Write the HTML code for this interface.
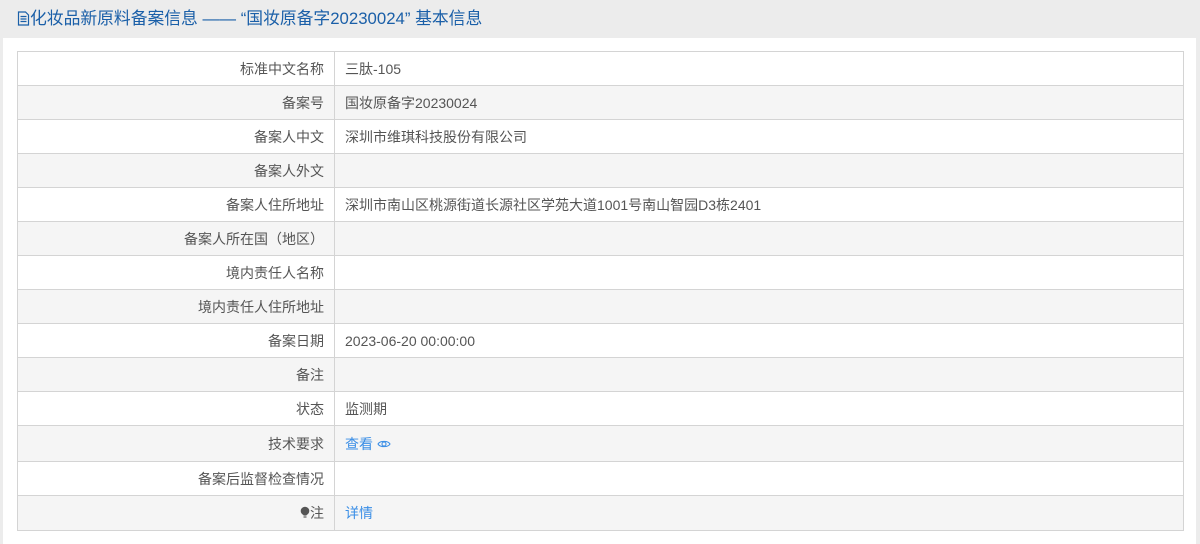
<!DOCTYPE html>
<html><head><meta charset="utf-8"><style>
*{margin:0;padding:0;box-sizing:border-box}
body{width:1200px;height:544px;background:#ececec;font-family:"Liberation Sans","Noto Sans CJK SC",sans-serif;overflow:hidden;position:relative}
.hd{position:absolute;left:17px;top:8px;font-size:16.8px;color:#1a5fa8;line-height:22px;white-space:nowrap}
.panel{position:absolute;left:3px;top:38px;width:1193px;height:506px;background:#fff}
table{position:absolute;left:17px;top:51px;width:1167px;border-collapse:collapse;font-size:14px;color:#555}
td{border:1px solid #d4d4d4;height:34px;padding:0 10px;line-height:20px}
td.l{width:317px;text-align:right}
tr:nth-child(even) td{background:#f5f5f5}
a{color:#3a8ee6;text-decoration:none}
</style></head><body>
<div class="hd"><svg width="13" height="15" viewBox="0 0 13 15" style="vertical-align:-2px"><path d="M1.5 1h7l3 3v10h-10z M3.5 5.5h6 M3.5 8h6 M3.5 10.5h6" fill="none" stroke="#1a5fa8" stroke-width="1.2"/></svg>化妆品新原料备案信息 —— “国妆原备字20230024” 基本信息</div>
<div class="panel"></div>
<table>
<tr><td class="l">标准中文名称</td><td>三肽-105</td></tr>
<tr><td class="l">备案号</td><td>国妆原备字20230024</td></tr>
<tr><td class="l">备案人中文</td><td>深圳市维琪科技股份有限公司</td></tr>
<tr><td class="l">备案人外文</td><td></td></tr>
<tr><td class="l">备案人住所地址</td><td>深圳市南山区桃源街道长源社区学苑大道1001号南山智园D3栋2401</td></tr>
<tr><td class="l">备案人所在国（地区）</td><td></td></tr>
<tr><td class="l">境内责任人名称</td><td></td></tr>
<tr><td class="l">境内责任人住所地址</td><td></td></tr>
<tr><td class="l">备案日期</td><td>2023-06-20 00:00:00</td></tr>
<tr><td class="l">备注</td><td></td></tr>
<tr><td class="l">状态</td><td>监测期</td></tr>
<tr><td class="l" style="height:36px">技术要求</td><td><a>查看 <svg width="14" height="10" viewBox="0 0 14 10" style="vertical-align:0"><path d="M1 5C3 1.5 11 1.5 13 5C11 8.5 3 8.5 1 5z" fill="none" stroke="#3a8ee6" stroke-width="1.1"/><circle cx="7" cy="5" r="2" fill="none" stroke="#3a8ee6" stroke-width="1.1"/></svg></a></td></tr>
<tr><td class="l">备案后监督检查情况</td><td></td></tr>
<tr><td class="l" style="height:35px"><svg width="10" height="13" viewBox="0 0 10 13" style="vertical-align:-1px"><circle cx="5" cy="5" r="4.3" fill="#555"/><rect x="3.5" y="9" width="3" height="3" fill="#999"/></svg>注</td><td><a>详情</a></td></tr>
</table>
</body></html>
